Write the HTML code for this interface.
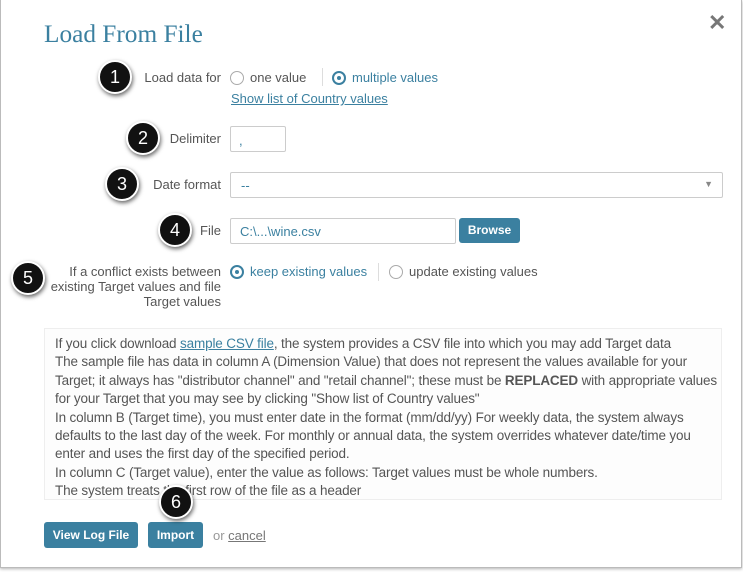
<!DOCTYPE html><html><head><style>
body{margin:0;width:743px;height:572px;background:#fff;font-family:"Liberation Sans",Arial,sans-serif;position:relative;overflow:hidden;color:#555}
.frame{position:absolute;left:0;top:0;width:740px;height:567px;border:1px solid #bbb;border-top:none;box-shadow:0 1px 3px rgba(0,0,0,.3)}
.a{position:absolute}
h1{position:absolute;left:44px;top:20px;margin:0;font-family:"Liberation Serif",serif;font-weight:normal;font-size:25.3px;color:#3b80a0}
.lbl{position:absolute;font-size:13px;color:#555;text-align:right}
.b{position:absolute;width:30px;height:30px;border-radius:50%;background:#111;border:2px solid #fff;box-shadow:1px 2px 4px rgba(0,0,0,.6);color:#fff;font-size:18px;text-align:center;line-height:30px;transform:translate(-17px,-17px)}
.radio{display:inline-block;width:14px;height:14px;border:1px solid #aaa;border-radius:50%;vertical-align:-3px;margin-right:6px;box-sizing:border-box;position:relative}
.radio.on{border:2px solid #3b80a0}
.radio.on:after{content:"";position:absolute;left:3px;top:3px;width:4px;height:4px;border-radius:50%;background:#3b80a0}
.opt{position:absolute;font-size:13px}
.inp{position:absolute;border:1px solid #ccc;border-radius:2px;box-sizing:border-box;font-size:13px;color:#3b80a0}
.btn{position:absolute;background:#3b80a0;color:#fff;font-weight:bold;font-size:12px;border-radius:3px;text-align:center}
.sep{position:absolute;width:1px;background:#ddd}
.txt{position:absolute;left:44px;top:328px;width:678px;height:172px;box-sizing:border-box;border:1px solid #eee;background:#fdfdfd;padding:6px 2px 6px 10px;font-size:13.5px;line-height:18.4px;color:#555;white-space:nowrap;letter-spacing:-0.15px;overflow:visible}
</style></head><body>
<div class="frame"></div>
<h1>Load From File</h1>
<div class="a" style="left:708px;top:10px;font-size:22px;color:#777;font-weight:bold">✕</div>

<div class="lbl" style="left:120px;top:70px;width:101px">Load data for</div>
<div class="opt" style="left:230px;top:70px"><span class="radio"></span>one value</div>
<div class="sep" style="left:322px;top:68px;height:18px"></div>
<div class="opt" style="left:332px;top:70px;color:#3b80a0"><span class="radio on"></span>multiple values</div>
<div class="opt" style="left:231px;top:91px;color:#3b80a0;text-decoration:underline">Show list of Country values</div>

<div class="lbl" style="left:120px;top:131px;width:101px">Delimiter</div>
<div class="inp" style="left:230px;top:126px;width:56px;height:26px;padding:6px 8px">,</div>

<div class="lbl" style="left:120px;top:177px;width:101px">Date format</div>
<div class="inp" style="left:230px;top:172px;width:493px;height:26px;padding:5px 10px">--<span style="position:absolute;right:9px;top:6px;font-size:9px;color:#888">▼</span></div>

<div class="lbl" style="left:120px;top:223px;width:101px">File</div>
<div class="inp" style="left:230px;top:218px;width:226px;height:26px;padding:5px 9px">C:\...\wine.csv</div>
<div class="btn" style="left:459px;top:218px;width:61px;height:25px;line-height:25px">Browse</div>

<div class="lbl" style="left:30px;top:264px;width:191px;line-height:15px">If a conflict exists between existing Target values and file Target values</div>
<div class="opt" style="left:230px;top:264px;color:#3b80a0"><span class="radio on"></span>keep existing values</div>
<div class="sep" style="left:378px;top:263px;height:18px"></div>
<div class="opt" style="left:389px;top:264px"><span class="radio"></span>update existing values</div>

<div class="txt">If you click download <span style="color:#3b80a0;text-decoration:underline">sample CSV file</span>, the system provides a CSV file into which you may add Target data<br>The sample file has data in column A (Dimension Value) that does not represent the values available for your<br>Target; it always has "distributor channel" and "retail channel"; these must be <b>REPLACED</b> with appropriate values<br>for your Target that you may see by clicking "Show list of Country values"<br>In column B (Target time), you must enter date in the format (mm/dd/yy) For weekly data, the system always<br>defaults to the last day of the week. For monthly or annual data, the system overrides whatever date/time you<br>enter and uses the first day of the specified period.<br>In column C (Target value), enter the value as follows: Target values must be whole numbers.<br>The system treats the first row of the file as a header</div>

<div class="btn" style="left:44px;top:522px;width:94px;height:26px;line-height:26px">View Log File</div>
<div class="btn" style="left:148px;top:522px;width:55px;height:26px;line-height:26px">Import</div>
<div class="opt" style="left:213px;top:528px;color:#999">or <span style="color:#777;text-decoration:underline">cancel</span></div>

<div class="b" style="left:115px;top:77px">1</div>
<div class="b" style="left:143px;top:138px">2</div>
<div class="b" style="left:122px;top:184px">3</div>
<div class="b" style="left:175px;top:230px">4</div>
<div class="b" style="left:28px;top:278px">5</div>
<div class="b" style="left:176px;top:502px">6</div>
</body></html>
